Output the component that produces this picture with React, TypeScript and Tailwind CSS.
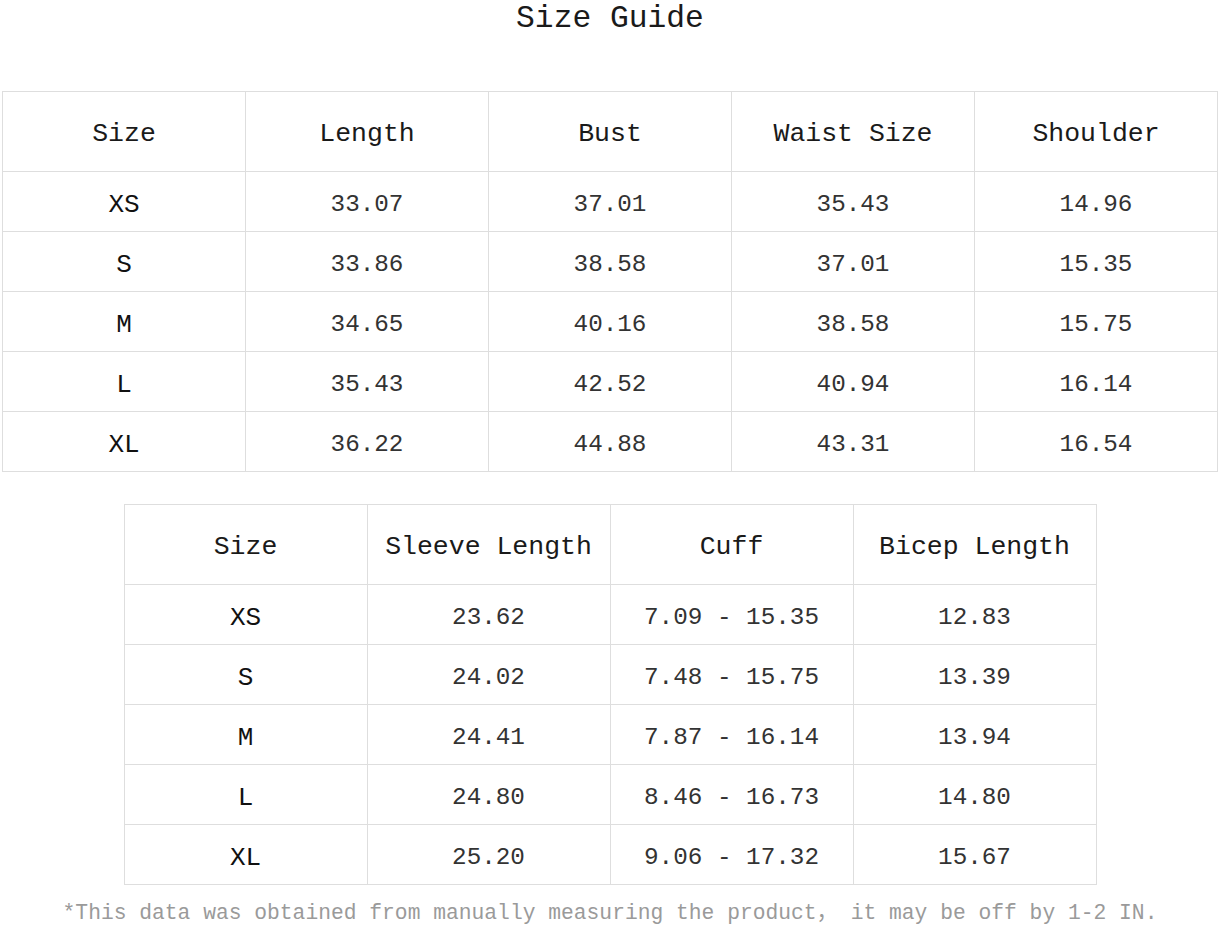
import React from "react";

const mono = { fontFamily: '"Liberation Mono", "Noto Sans CJK SC", monospace' };

const bodyRows = [
  ["XS", "33.07", "37.01", "35.43", "14.96"],
  ["S", "33.86", "38.58", "37.01", "15.35"],
  ["M", "34.65", "40.16", "38.58", "15.75"],
  ["L", "35.43", "42.52", "40.94", "16.14"],
  ["XL", "36.22", "44.88", "43.31", "16.54"],
];

const sleeveRows = [
  ["XS", "23.62", "7.09 - 15.35", "12.83"],
  ["S", "24.02", "7.48 - 15.75", "13.39"],
  ["M", "24.41", "7.87 - 16.14", "13.94"],
  ["L", "24.80", "8.46 - 16.73", "14.80"],
  ["XL", "25.20", "9.06 - 17.32", "15.67"],
];

function SizeTable(props: { head: string[]; rows: string[][]; width: string }) {
  const { head, rows, width } = props;
  return (
    <table className={`${width} mx-auto border-collapse table-fixed`}>
      <thead>
        <tr className="h-[80px]">
          {head.map((h) => (
            <th key={h} className="border border-[#dedede] pt-[7px] font-normal text-[26.5px] text-[#1a1a1a] text-center">
              {h}
            </th>
          ))}
        </tr>
      </thead>
      <tbody>
        {rows.map((r) => (
          <tr key={r[0]} className="h-[60px]">
            {r.map((c, i) => (
              <td
                key={i}
                className={`border border-[#dedede] pt-[8px] text-center ${
                  i == 0 ? "text-[26px] text-[#111]" : "text-[24.3px] text-[#333]"
                }`}
              >
                {c}
              </td>
            ))}
          </tr>
        ))}
      </tbody>
    </table>
  );
}

export default function App() {
  return (
    <div className="w-[1220px] h-[925px] bg-white overflow-hidden" style={mono}>
      <h1 className="h-[91px] pt-[1px] text-center text-[31.3px] leading-[36px] text-[#1a1a1a]">
        Size Guide
      </h1>
      <SizeTable
        head={["Size", "Length", "Bust", "Waist Size", "Shoulder"]}
        rows={bodyRows}
        width="w-[1216px]"
      />
      <div className="h-[32px]"></div>
      <SizeTable
        head={["Size", "Sleeve Length", "Cuff", "Bicep Length"]}
        rows={sleeveRows}
        width="w-[973px]"
      />
      <p className="mt-[14px] text-center text-[21.3px] leading-[28px] text-[#9a9a9a]">
        *This data was obtained from manually measuring the product， it may be off by 1-2 IN.
      </p>
    </div>
  );
}
